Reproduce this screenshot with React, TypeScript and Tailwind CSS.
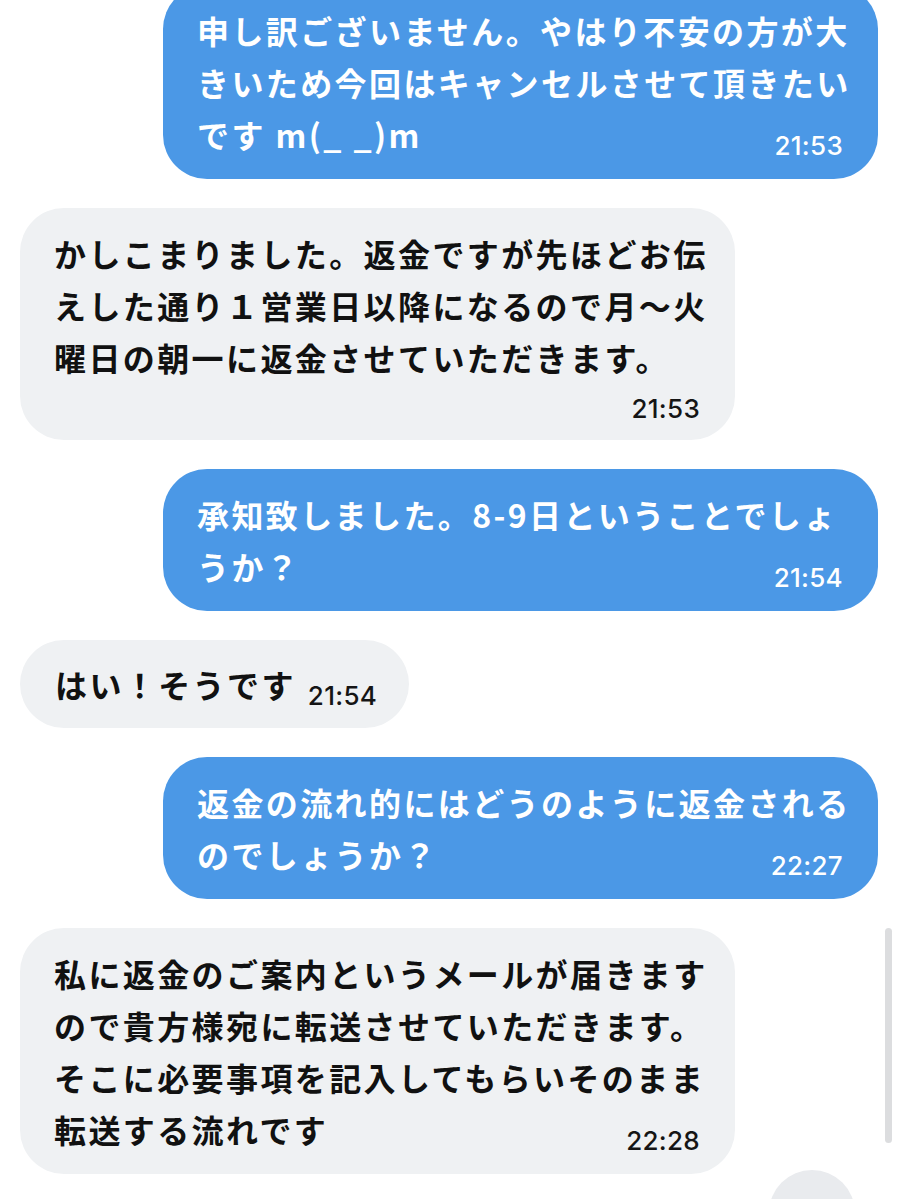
import React from "react";

type Msg = {
  side: "me" | "them";
  lines: string[];
  time: string;
  ownLine?: boolean;
  short?: boolean;
};

const msgs: Msg[] = [
  {
    side: "me",
    lines: [
      "申し訳ございません。やはり不安の方が大",
      "きいため今回はキャンセルさせて頂きたい",
      "です m(_ _)m",
    ],
    time: "21:53",
  },
  {
    side: "them",
    lines: [
      "かしこまりました。返金ですが先ほどお伝",
      "えした通り１営業日以降になるので月〜火",
      "曜日の朝一に返金させていただきます。",
    ],
    time: "21:53",
    ownLine: true,
  },
  {
    side: "me",
    lines: ["承知致しました。8-9日ということでしょ", "うか？"],
    time: "21:54",
  },
  {
    side: "them",
    lines: ["はい！そうです"],
    time: "21:54",
    short: true,
  },
  {
    side: "me",
    lines: ["返金の流れ的にはどうのように返金される", "のでしょうか？"],
    time: "22:27",
  },
  {
    side: "them",
    lines: [
      "私に返金のご案内というメールが届きます",
      "ので貴方様宛に転送させていただきます。",
      "そこに必要事項を記入してもらいそのまま",
      "転送する流れです",
    ],
    time: "22:28",
  },
];

const jp = { fontFamily: '"Noto Sans CJK JP", "Noto Sans", sans-serif' };
const num = { fontFamily: 'Inter, "Liberation Sans", Arial, sans-serif' };

function Time({ t, me }: { t: string; me: boolean }) {
  return (
    <span
      style={num}
      className={`relative top-[7px] text-[26px] leading-[26px] font-medium tracking-[0.3px] whitespace-nowrap ${
        me ? "text-white" : "text-[#151515]"
      }`}
    >
      {t}
    </span>
  );
}

function Bubble({ m }: { m: Msg }) {
  const me = m.side === "me";
  const bg = me ? "bg-[#4b98e6] text-white" : "bg-[#eff1f3] text-[#111111]";
  const textCls = "text-[32px] leading-[52px] tracking-[2.4px] font-semibold whitespace-nowrap";

  if (m.short) {
    return (
      <div className={`self-start rounded-[44px] ${bg} pl-[35px] pr-[32px] py-[18px] flex items-baseline gap-[12px]`}>
        <span style={jp} className={textCls}>
          {m.lines[0]}
        </span>
        <Time t={m.time} me={me} />
      </div>
    );
  }

  const head = m.ownLine ? m.lines : m.lines.slice(0, -1);
  const last = m.ownLine ? null : m.lines[m.lines.length - 1];

  return (
    <div
      className={`w-[715px] rounded-[44px] ${bg} pl-[34px] pr-[35px] py-[19px] flex flex-col ${
        me ? "self-end" : "self-start"
      }`}
    >
      {head.map((l, i) => (
        <div key={i} style={jp} className={textCls}>
          {l}
        </div>
      ))}
      {last !== null ? (
        <div className="flex items-baseline justify-between">
          <span style={jp} className={textCls}>
            {last}
          </span>
          <Time t={m.time} me={me} />
        </div>
      ) : (
        <div className="flex justify-end items-start mt-[6px] h-[32px]">
          <Time t={m.time} me={me} />
        </div>
      )}
    </div>
  );
}

export default function App() {
  return (
    <div className="relative w-[899px] h-[1199px] overflow-hidden bg-white">
      <div className="flex flex-col gap-[29px] pl-[20px] pr-[21px] mt-[-15px]">
        {msgs.map((m, i) => (
          <Bubble key={i} m={m} />
        ))}
      </div>
      <div className="absolute left-[885px] top-[928px] w-[7px] h-[215px] rounded-full bg-[#dcdddf]" />
      <div className="absolute left-[769px] top-[1170px] w-[86px] h-[86px] rounded-full bg-[#e9ebee]" />
    </div>
  );
}
